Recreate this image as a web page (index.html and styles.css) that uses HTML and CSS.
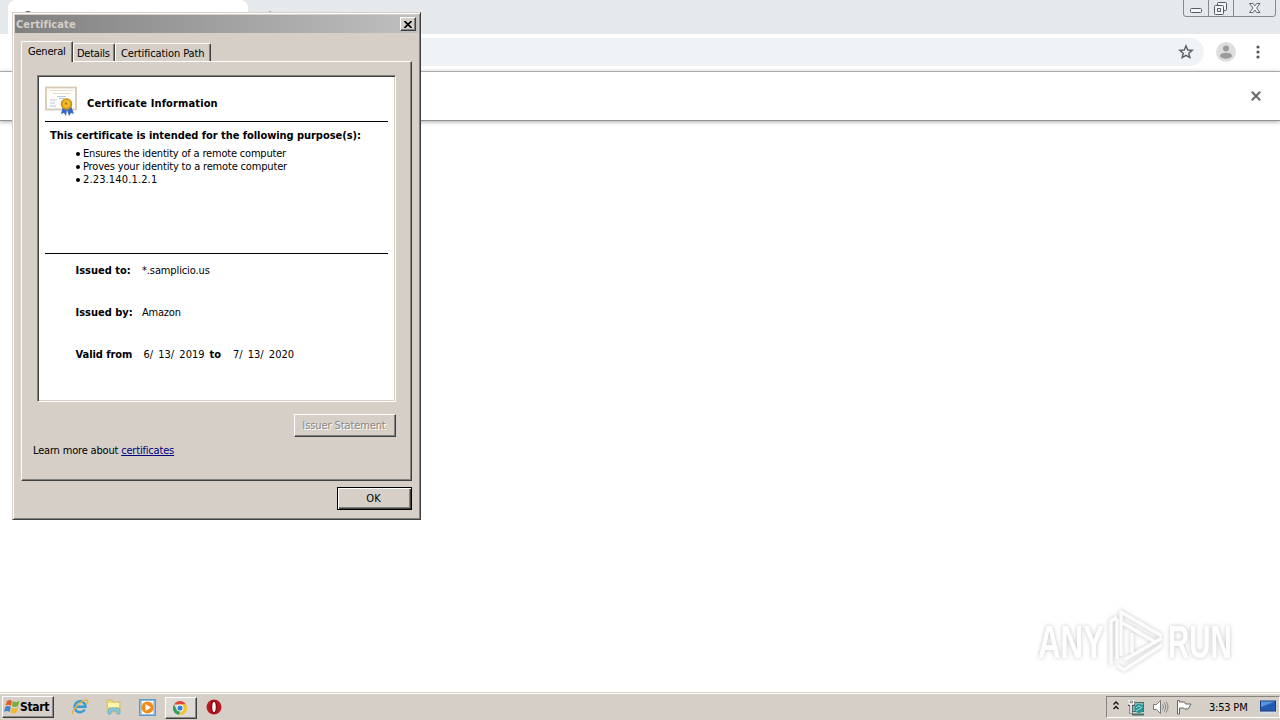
FILE: index.html
```html
<!DOCTYPE html>
<html lang="en">
<head>
<meta charset="utf-8">
<title>Certificate</title>
<link rel="stylesheet" href="styles.css">
</head>
<body>
<div class="desktop">
  <header class="tabstrip">
    <div class="browser-tab"><svg class="favicon" width="12" height="12" viewBox="0 0 12 12"><circle cx="6" cy="6" r="5" fill="#5f6368"/></svg></div>
    <svg class="new-tab" width="10" height="10" viewBox="0 0 10 10"><path d="M5 0v10M0 5h10" stroke="#8b9095" stroke-width="1.5"/></svg>
    <svg class="window-controls" width="94" height="18" viewBox="0 0 94 18">
      <path d="M.5 0V14Q.5 16.500 3 16.500H90Q92.500 16.500 92.500 14V0M25.500 0V16M50.500 0V16" fill="none" stroke="#858a90"/>
      <g fill="#f4f6f8" stroke="#555a62"><rect x="7.500" y="8.500" width="11" height="4" rx="1"/><rect x="34.500" y="2.500" width="9" height="8" rx="1"/><rect x="31.500" y="5.500" width="9" height="9" rx="1"/><path d="M34.500 8.500h3v3h-3z"/><path d="M66.500 3.500h3.500l1.800 2.400 1.800-2.400h3.400l-3.400 4.500 3.400 4.500h-3.400l-1.800-2.500-1.800 2.500h-3.500l3.500-4.500z" stroke-width=".9"/></g>
    </svg>
  </header>
  <div class="toolbar">
    <div class="address"><svg width="18" height="18" viewBox="0 0 24 24"><path d="M12 3.800l2.300 5.500 6 .5-4.600 3.900 1.400 5.800-5.100-3.100-5.100 3.100 1.400-5.800-4.600-3.900 6-.5z" fill="none" stroke="#5a5e63" stroke-width="1.900"/></svg></div>
    <svg class="avatar" width="20" height="20" viewBox="0 0 20 20"><circle cx="10" cy="10" r="10" fill="#dddee0"/><circle cx="10" cy="6.500" r="3" fill="#9b9b9b"/><ellipse cx="10" cy="13.700" rx="6" ry="3" fill="#9b9b9b"/></svg>
    <svg class="kebab" width="4" height="14" viewBox="0 0 4 14" fill="#55585d"><circle cx="2" cy="2" r="1.600"/><circle cx="2" cy="7" r="1.600"/><circle cx="2" cy="12" r="1.600"/></svg>
  </div>
  <div class="infobar"><svg width="10" height="10" viewBox="0 0 10 10"><path d="M.8.8l8.400 8.400M9.200.8L.8 9.200" stroke="#66696d" stroke-width="2"/></svg></div>
  <main class="page">
    <svg class="watermark" width="230" height="80" viewBox="0 0 230 80">
      <defs><linearGradient id="fade" x1="0" y1="20" x2="0" y2="62" gradientUnits="userSpaceOnUse"><stop offset=".52" stop-color="#fff"/><stop offset=".53" stop-color="#f1f1f1"/></linearGradient></defs>
      <g class="mark-shadow">
        <path d="M91 65V21L97 17M97 59V19M101 56V12L142 36M101 22L137 43M104 60L142 38M97 65L104 70L142 45M112 53V33" fill="none" stroke="#fcfcfc" stroke-width="3.500"/>
        <text class="mark-text" transform="translate(18 58) scale(.68 1)">ANY</text>
        <text class="mark-text" transform="translate(148 58) scale(.64 1)">RUN</text>
      </g>
    </svg>
  </main>
  <footer class="taskbar">
    <div class="start"><svg width="17" height="16" viewBox="0 0 17 16"><path d="M3 2q3-2 5 0L7 7q-2-2-5.500-.5z" fill="#e45d24"/><path d="M9 2q3 2 6.500 0L14 7q-3 2-6 0z" fill="#75af3d"/><path d="M1.200 8q3-2 5.600 0l-1.200 5q-3-2-5.500 0z" fill="#4585c7"/><path d="M8 8.500q3 2 6 0l-1.500 5q-3 2-6 0z" fill="#f3b82f"/></svg><span>Start</span></div>
    <div class="launchers">
      <svg class="ie" width="18" height="18" viewBox="0 0 18 18"><path d="M13.800 11.500A5.500 5.500 0 1 1 14.500 8.800H4.500" fill="none" stroke="#369cd4" stroke-width="2.400"/><path d="M2 16C-.5 13 11 1 16 2.300 17.500 3 16.500 5 15.500 6" fill="none" stroke="#e8b53d" stroke-width="1.500"/></svg>
      <svg class="folder" width="18" height="18" viewBox="0 0 18 18"><path d="M2 4V2h5l1 2h7v10H2z" fill="#efd97c" stroke="#dabd60"/><path d="M3 5h11v4H3z" fill="#fff4b0"/><path d="M3 16v-3q0-3 3-3h6q3 0 3 3v3h-3v-3H6v3z" fill="#8ac9e2" stroke="#4f9ec2" stroke-width=".6"/></svg>
      <svg class="media" width="17" height="17" viewBox="0 0 17 17"><rect x=".7" y=".7" width="15.600" height="15.600" fill="#a9d1ec" stroke="#5798c8" stroke-width="1.300"/><rect x="3" y="2" width="11" height="13" fill="#fff"/><circle cx="8.500" cy="8.500" r="6" fill="#f08a18"/><path d="M6.500 5l5.500 3.500L6.500 12z" fill="#fff"/></svg>
      <div class="active-task"><svg width="14" height="14" viewBox="0 0 16 16"><path d="M1 4a8 8 0 0 1 14 0H8z" fill="#df4937"/><path d="M1 4l3.500 6L8 12l-1 4A8 8 0 0 1 1 4z" fill="#35a059"/><path d="M8 4h7a8 8 0 0 1-8 12l4.500-6z" fill="#f4c62d"/><circle cx="8" cy="8" r="4" fill="#fff"/><circle cx="8" cy="8" r="3" fill="#3c80d4"/></svg></div>
      <svg class="opera" width="16" height="16" viewBox="0 0 16 16"><circle cx="8" cy="8" r="7.500" fill="#bb1720"/><ellipse cx="8" cy="8" rx="3.500" ry="6.500" fill="#861017"/><ellipse cx="8" cy="8" rx="1.700" ry="5" fill="#fff"/></svg>
    </div>
    <div class="tray">
      <svg class="chevrons" width="6" height="9" viewBox="0 0 6 9"><path d="M.5 3.500L3 1l2.500 2.500M.5 8L3 5.500 5.500 8" fill="none" stroke="#111" stroke-width="1.400"/></svg>
      <svg class="network" width="17" height="17" viewBox="0 0 17 17"><rect x="4" y="3.500" width="11.500" height="9" fill="#82b9b0" stroke="#49706d"/><path d="M4 15.500h12" stroke="#49706d" stroke-width="2"/><path d="M1 2v3.500h4.500V2M3 6v9" fill="none" stroke="#555" stroke-width="3"/><path d="M1 1v4h4.500V1M3 5v9.500" fill="none" stroke="#fff" stroke-width="1.600"/><circle cx="11" cy="9.500" r="4.500" fill="#25969c"/><path d="M8 9q3-4 6 0M8 12l5-3" fill="none" stroke="#a7dfcf"/></svg>
      <svg class="speaker" width="17" height="16" viewBox="0 0 17 16"><path d="M1.500 5.500h3l4-4v13l-4-4h-3z" fill="#fff" stroke="#777"/><path d="M10.500 5.500q2 2.500 0 5M12 3.500q3.500 4.500 0 9M14 2.500q4 5.500 0 11" fill="none" stroke="#888"/></svg>
      <svg class="flag" width="16" height="15" viewBox="0 0 16 15"><path d="M1.500.5h2v1.500h5l1 2h5.500l-3 5H8.500L7.500 8h-4v6h-2z" fill="#fff" stroke="#666"/></svg>
      <span class="clock">3:53 PM</span>
      <svg class="screen" width="16" height="14" viewBox="0 0 16 14"><rect x=".5" y="1" width="15" height="10" fill="#225bb4" stroke="#173f80"/><path d="M1 1.500h14L1 7z" fill="#5794dc"/><path d="M0 12h16v1.500H0z" fill="#cdddea"/></svg>
    </div>
  </footer>

  <section class="dialog">
    <div class="titlebar"><span class="t-title">Certificate</span><div class="close"><svg width="8" height="7" viewBox="0 0 8 7"><path d="M.5 0L7.500 7M7.500 0L.5 7" stroke="#000" stroke-width="1.600"/></svg></div></div>
    <nav class="tabs"><div class="tab selected"><span class="t-general">General</span></div><div class="tab details"><span class="t-details">Details</span></div><div class="tab path"><span class="t-path">Certification Path</span></div></nav>
    <div class="panel">
      <div class="sheet">
        <div class="sheet-head">
          <svg width="33" height="32" viewBox="0 0 33 32"><rect x="1" y="2.500" width="30" height="22" fill="#fffefa" stroke="#d8c9b5" stroke-width="1.800"/><path d="M4.500 5.500h24M8 8.500h17" stroke="#eadbd0"/><path d="M12 11.500h9M5 15h7M14 13.500h5M5 18h5M5 21h6" stroke="#b3c7e2"/><path d="M18 21l-2 8 3-1 2 3 1-6 2 6 2-3 3 1-3-8" fill="#3b66c5"/><circle cx="21.500" cy="19" r="5.300" fill="#dda01e" stroke="#c08912"/><circle cx="21.500" cy="19" r="3.700" fill="#f4bb2d"/><circle cx="21" cy="18.500" r="1.300" fill="#b38322"/></svg>
          <b class="t-info">Certificate Information</b>
        </div>
        <b class="purpose">This certificate is intended for the following purpose(s):</b>
        <ul><li><span class="t-l1">Ensures the identity of a remote computer</span></li><li><span class="t-l2">Proves your identity to a remote computer</span></li><li><span class="t-l3">2.23.140.1.2.1</span></li></ul>
        <div class="facts">
          <div class="fact"><b class="t-to">Issued to:</b><span class="t-host">*.samplicio.us</span></div>
          <div class="fact"><b class="t-by">Issued by:</b><span class="t-amazon">Amazon</span></div>
          <div class="fact valid"><b class="t-valid">Valid from</b><span class="date">6/ 13/ 2019</span><b class="until">to</b><span class="date second">7/ 13/ 2020</span></div>
        </div>
      </div>
      <div class="button disabled"><span>Issuer Statement</span></div>
      <div class="learn"><span>Learn more about <a>certificates</a></span></div>
    </div>
    <div class="button ok"><span>OK</span></div>
  </section>
</div>
</body>
</html>
```
FILE: styles.css
```css
* { box-sizing: border-box; }
body { margin: 0; overflow: hidden; font: 11px/13px "DejaVu Sans Condensed", "DejaVu Sans", sans-serif; font-stretch: condensed; color: #000; }
svg { display: block; flex: none; }
span, b { white-space: nowrap; }
.desktop { position: relative; width: 1280px; height: 720px; display: flex; flex-direction: column; background: #fff; }
.tabstrip { height: 34px; display: flex; background: #e6e9ec; padding-left: 8px; }
.browser-tab { width: 240px; border-radius: 8px 8px 0 0; background: #fff; padding: 10px 0 0 14px; }
.new-tab { margin: 11px 0 0 17px; }
.window-controls { margin: 0 3px 0 auto; }
.toolbar { height: 37px; display: flex; align-items: center; padding: 0 20px 2px 40px; }
.address { flex: 1; height: 28px; border-radius: 14px; background: #f0f3f6; display: flex; align-items: center; justify-content: flex-end; padding-right: 9px; }
.avatar { margin: 0 20px 0 12px; }
.infobar { height: 50px; border-top: 1px solid #aaa; border-bottom: 1px solid #929292; box-shadow: 0 1px 4px #aaa; display: flex; align-items: center; justify-content: flex-end; padding-right: 19px; }
.page { flex: 1; display: flex; align-items: flex-end; justify-content: flex-end; padding: 0 30px 12px 0; }
.watermark { overflow: visible; }
.mark-shadow { filter: drop-shadow(0 0 2px #c4c4c4); }
.mark-text { font: bold 46px "Liberation Sans", sans-serif; fill: url(#fade); }
.taskbar { height: 28px; background: #d5cfc8; border-top: 1px solid #d5d1c9; box-shadow: inset 0 1px #fff; display: flex; padding: 3px 0 1px 2px; }
.start { width: 52px; height: 22px; border: 1px solid #fff; border-right-color: #404040; border-bottom-color: #404040; box-shadow: inset -1px -1px #888; display: flex; align-items: center; padding-left: 1px; font-weight: bold; font-size: 12px; }
.start span { letter-spacing: -.3px; margin-left: -1px; }
.launchers { display: flex; align-items: center; }
.launchers > svg { margin-top: -1px; }
.ie { margin-left: 17px; }
.folder { margin-left: 16px; }
.media { margin-left: 16px; }
.active-task { width: 32px; height: 22px; margin: 0 9px 0 9px; background: #dedbd6; border: 1px solid #fff; border-right-color: #404040; border-bottom-color: #404040; box-shadow: inset -1px -1px #888; display: grid; place-items: center; padding-right: 2px; }
.tray { margin-left: auto; width: 174px; height: 22px; border: 1px solid #88847f; border-right-color: #fff; border-bottom-color: #fff; display: flex; align-items: center; }
.chevrons { margin: 0 0 3px 6px; }
.network { margin-left: 9px; }
.speaker { margin-left: 7px; }
.flag { margin-left: 7px; }
.clock { width: 40px; margin: 0 11px 0 17px; letter-spacing: -.2px; }
.dialog { position: absolute; left: 12px; top: 12px; width: 409px; height: 508px; background: #d5cfc8; border: 1px solid #d5cfc8; border-right-color: #404040; border-bottom-color: #404040; box-shadow: inset 1px 1px #fff, inset -1px -1px #808080; padding: 2px 2px 0; }
.titlebar { height: 18px; background: linear-gradient(90deg, #808080, #c0c0c0); color: #d5cfc8; font-weight: bold; display: flex; align-items: center; justify-content: space-between; padding: 0 2px 0 1px; }
.close { width: 16px; height: 14px; background: #d5cfc8; border: 1px solid #fff; border-right-color: #404040; border-bottom-color: #404040; box-shadow: inset -1px -1px #808080; display: grid; place-items: center; }
.tabs { height: 28px; padding: 8px 0 0 6px; display: flex; align-items: flex-end; }
.tab { height: 18px; border: 1px solid #fff; border-right: 1px solid #404040; border-bottom: 0; border-radius: 2px 2px 0 0; box-shadow: inset -1px 0 #808080; padding: 3px 0 0 4px; }
.selected { width: 52px; height: 21px; margin-bottom: -1px; padding: 3px 0 0 6px; background: #d5cfc8; position: relative; }
.details { width: 42px; padding-left: 3px; }
.path { width: 96px; padding-left: 5px; }
.t-title { letter-spacing: .1px; }
.t-general { letter-spacing: -.2px; }
.t-details { letter-spacing: -.25px; }
.t-path { letter-spacing: -.1px; }
.t-info { letter-spacing: .13px; }
.t-l1 { letter-spacing: -.19px; }
.t-l2 { letter-spacing: -.17px; }
.t-l3 { letter-spacing: .14px; }
.t-host { letter-spacing: -.12px; }
.t-amazon { letter-spacing: -.2px; }
.t-valid { letter-spacing: -.05px; }
.panel { width: 391px; height: 420px; margin-left: 6px; border: 1px solid #fff; border-right-color: #404040; border-bottom-color: #404040; box-shadow: inset -1px -1px #808080; padding: 13px 15px 0; display: flex; flex-direction: column; }
.sheet { height: 327px; background: #fff; border: 1px solid #808080; border-right-color: #fff; border-bottom-color: #fff; box-shadow: inset 1px 1px #404040, inset -1px -1px #d5cfc8; padding: 9px 7px 0; display: flex; flex-direction: column; }
.sheet-head { height: 37px; border-bottom: 1px solid #000; display: flex; }
.sheet-head b { margin: 12px 0 0 9px; }
.purpose { margin: 7px 0 0 5px; letter-spacing: -.05px; }
ul { list-style: none; margin: 5px 0 0 31px; padding: 0; height: 106px; }
li { display: flex; align-items: center; height: 13px; }
li::before { content: ""; width: 4px; height: 4px; border-radius: 50%; background: #000; margin-right: 3px; }
.facts { border-top: 1px solid #000; padding: 10px 0 0 30.500px; }
.fact { height: 42px; display: flex; }
.fact b:first-child { width: 66.500px; }
.date { width: 66px; margin-left: 1.500px; white-space: pre; word-spacing: 2px; }
.until { width: 22px; }
.button { height: 23px; border: 1px solid #fff; border-right-color: #404040; border-bottom-color: #404040; box-shadow: inset -1px -1px #808080; display: grid; place-items: center; }
.disabled { align-self: flex-end; width: 102px; margin-top: 12px; padding-right: 2px; color: #8c8882; text-shadow: 1px 1px #fff; letter-spacing: -.1px; }
.learn { margin: 7px 0 0 -4px; letter-spacing: -.18px; }
.learn a { color: #00007f; text-decoration: underline; }
.ok { width: 75px; margin: 6px 0 0 322px; padding-right: 2px; border-color: #000; box-shadow: inset 1px 1px #fff, inset -1px -1px #404040, inset -2px -2px #808080; }
```
